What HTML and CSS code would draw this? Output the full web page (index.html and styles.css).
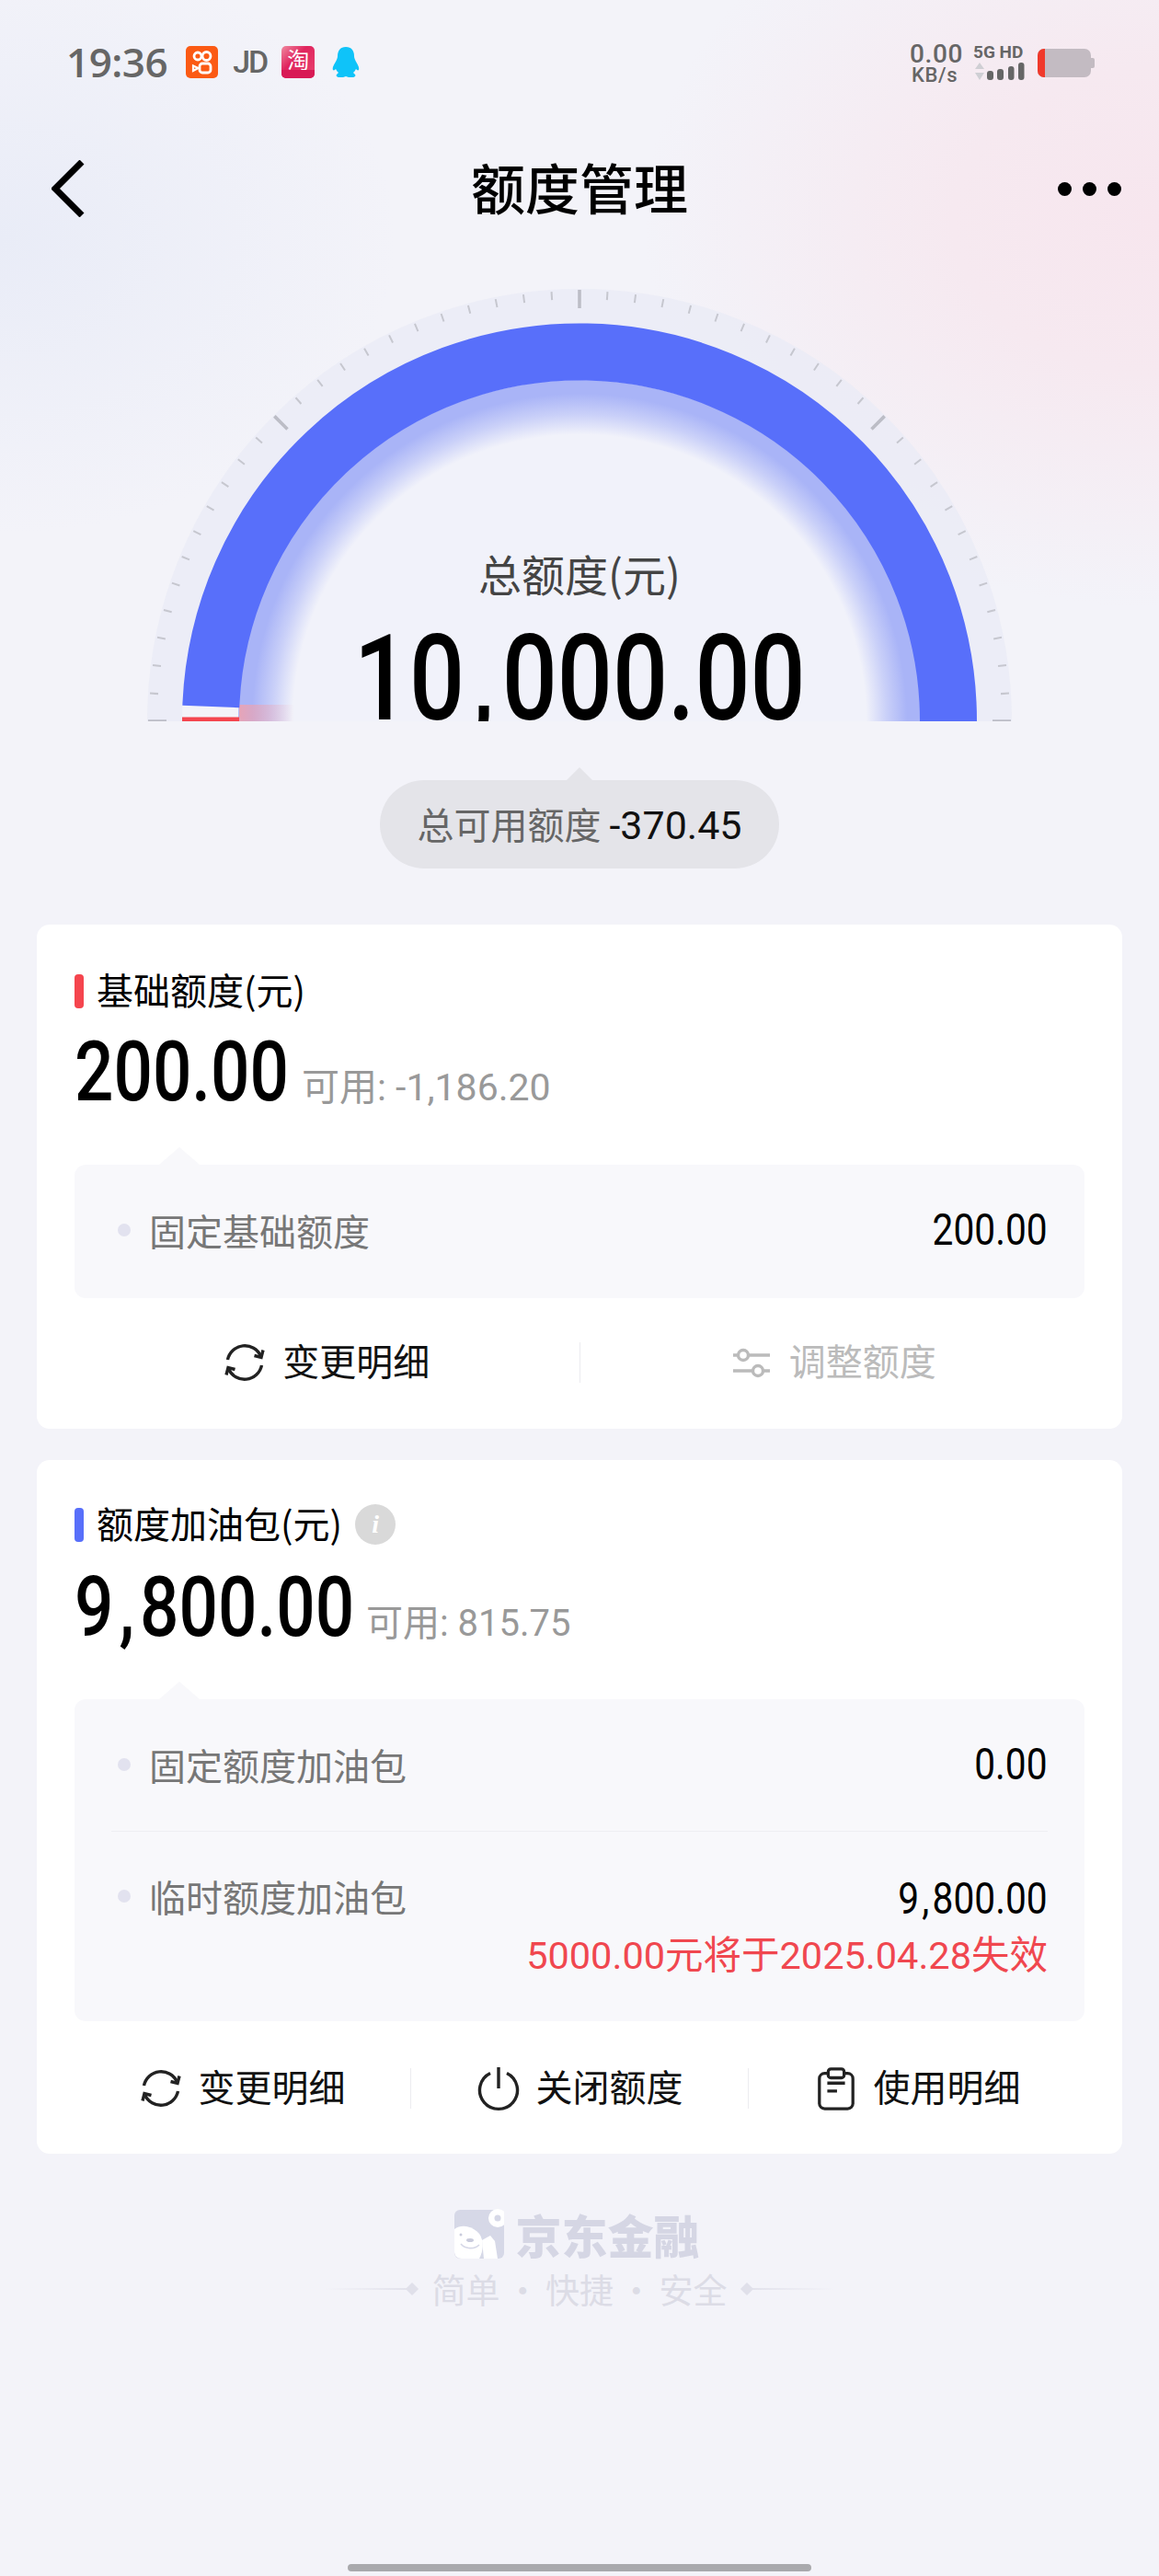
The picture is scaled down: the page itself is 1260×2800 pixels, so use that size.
FILE: index.html
```html
<!DOCTYPE html>
<html lang="zh-CN">
<head>
  <meta charset="UTF-8" />
  <meta name="viewport" content="width=device-width, initial-scale=1.0" />
  <title>额度管理</title>
  <link rel="stylesheet" href="styles.css">
</head>
<body>
  <div class="page">
    <div class="status">
      <div class="status-left">
        <span class="time">19:36</span>
        <svg class="app-icon" viewBox="0 0 35 35"><rect width="35" height="35" rx="5" fill="#fb5a14"/><g fill="none" stroke="#fff" stroke-width="2.8"><circle cx="13" cy="11" r="4"/><circle cx="22.5" cy="11" r="4.5"/><rect x="15" y="19" width="12" height="10" rx="3"/></g><path d="M8 21.5l5.5 2.5L8 27z" fill="none" stroke="#fff" stroke-width="2.2"/></svg>
        <span class="jd">JD</span>
        <div class="tao"><span>淘</span><i class="tao-strip"></i></div>
        <svg class="qq" viewBox="0 0 30 33"><path d="M15 0c6 0 9 4 9 10 0 2 1 4 2 6 2 3 4 7 3 9-1 1-2 0-3-1-1 2-2 3-3 4l2 2c1 1 0 3-3 3h-4l-3-1-3 1H8c-3 0-4-2-3-3l2-2c-1-1-2-2-3-4-1 1-2 2-3 1-1-2 1-6 3-9 1-2 2-4 2-6C6 4 9 0 15 0z" fill="#0fc3f9"/></svg>
      </div>
      <div class="status-right">
        <div class="speed"><span>0.00</span><span class="unit">KB/s</span></div>
        <div class="net">
          <span class="net-label">5G HD</span>
          <svg class="signal" viewBox="0 0 58 20"><path d="M7 0l5 7H2zM7 19l5-8H2z" fill="#cfcfd4"/><rect x="15" y="9" width="7" height="10" rx="3" fill="#666"/><rect x="26" y="7" width="7" height="12" rx="3" fill="#666"/><rect x="38" y="4" width="6.500" height="15" rx="3" fill="#666"/><rect x="49" y="0" width="6.500" height="19" rx="3" fill="#666"/></svg>
        </div>
        <svg class="battery" viewBox="0 0 62 31"><rect width="58" height="31" rx="7" fill="#c3bbc2"/><path d="M7 0h1v31H7a7 7 0 0 1-7-7V7a7 7 0 0 1 7-7z" fill="#f0392b"/><path d="M58 10h2a2 2 0 0 1 2 2v7a2 2 0 0 1-2 2h-2z" fill="#c3bbc2"/></svg>
      </div>
    </div>

    <div class="nav">
      <svg class="back" viewBox="0 0 36 62"><path d="M33 2L4 31l29 29" fill="none" stroke="#000" stroke-width="7"/></svg>
      <h1 class="nav-title">额度管理</h1>
      <div class="more"><i></i><i></i><i></i></div>
    </div>

    <div class="gauge">
      <svg class="gauge-svg" viewBox="0 0 1260 484">
        <defs>
          <radialGradient id="glow" gradientUnits="userSpaceOnUse" cx="630" cy="484" r="371">
            <stop offset="0.84" stop-color="#a9b4f7" stop-opacity="0"/>
            <stop offset="0.9" stop-color="#a9b4f7" stop-opacity="0.55"/>
            <stop offset="0.96" stop-color="#a9b4f7" stop-opacity="1"/>
            <stop offset="1" stop-color="#a9b4f7" stop-opacity="1"/>
          </radialGradient>
          <linearGradient id="pink" x1="0" x2="1" y1="0" y2="0">
            <stop offset="0" stop-color="#f5a0a8" stop-opacity="0.8"/>
            <stop offset="1" stop-color="#f5a0a8" stop-opacity="0"/>
          </linearGradient>
        </defs>
        <circle cx="630" cy="484" r="451" fill="none" stroke="#e9ebf6" stroke-opacity="0.75" stroke-width="38"/>
        <circle cx="630" cy="484" r="371" fill="#f1f2fa"/>
        <circle cx="630" cy="484" r="371" fill="url(#glow)"/>
        <rect x="260" y="466" width="60" height="18" fill="url(#pink)"/>
        <path d="M166.5 484A463.5 463.5 0 0 1 1093.5 484" fill="none" stroke="#c6c7cf" stroke-width="9" pathLength="480" stroke-dasharray="0.66 9.34" stroke-dashoffset="0.33"/>
        <path d="M171 484A459 459 0 0 1 1089 484" fill="none" stroke="#bcbdc6" stroke-width="20" pathLength="400" stroke-dasharray="1 99" stroke-dashoffset="0.5"/>
        <path d="M229.3 468A401 401 0 0 1 1031 484" fill="none" stroke="#586ffa" stroke-width="62"/>
        <path d="M198 479.5h62v4.500H198z" fill="#f4454f"/>
      </svg>
      <div class="gauge-label">总额度(元)</div>
      <div class="gauge-total"><span>10<i class="comma">,</i>000.00</span></div>
    </div>

    <div class="pill">总可用额度 <span class="pill-num">-370.45</span></div>

    <div class="card card-base">
      <div class="card-title"><i class="mark mark-red"></i>基础额度(元)</div>
      <div class="amount-row"><span class="amount">200.00</span><span class="avail">可用: -1,186.20</span></div>
      <div class="panel">
        <div class="row row-one">
          <span class="row-label"><i class="dot"></i>固定基础额度</span>
          <span class="row-value">200.00</span>
        </div>
      </div>
      <div class="actions">
        <div class="action">
          <svg class="icon" viewBox="0 0 44 44"><use href="#refresh"/></svg>
          <span>变更明细</span>
        </div>
        <div class="action action-off">
          <svg class="icon" viewBox="0 0 44 44"><path d="M2 14h6M18 14h24M2 31h22M34 31h8" fill="none" stroke="currentColor" stroke-width="3.6"/><circle cx="13" cy="14" r="5.500" fill="none" stroke="currentColor" stroke-width="3.4"/><circle cx="29" cy="31" r="5.500" fill="none" stroke="currentColor" stroke-width="3.4"/></svg>
          <span>调整额度</span>
        </div>
      </div>
    </div>

    <div class="card card-pack">
      <div class="card-title"><i class="mark mark-blue"></i>额度加油包(元)<span class="info">i</span></div>
      <div class="amount-row"><span class="amount amount-wide">9<i class="comma">,</i>800.00</span><span class="avail">可用: 815.75</span></div>
      <div class="panel">
        <div class="row row-line">
          <span class="row-label"><i class="dot"></i>固定额度加油包</span>
          <span class="row-value">0.00</span>
        </div>
        <div class="row row-temp">
          <span class="row-label"><i class="dot"></i>临时额度加油包</span>
          <div class="row-right">
            <span class="row-value">9<i class="comma">,</i>800.00</span>
            <span class="row-warn">5000.00元将于2025.04.28失效</span>
          </div>
        </div>
      </div>
      <div class="actions">
        <div class="action">
          <svg class="icon" viewBox="0 0 44 44">
            <g id="refresh" fill="none" stroke="#222" stroke-width="3.4">
              <path d="M3.500 19A19 19 0 0 1 39.500 15"/>
              <path d="M32.500 14.500l7.500 2 2-8"/>
              <path d="M40.500 25A19 19 0 0 1 4.500 29"/>
              <path d="M11.500 29.500l-7.500-2-2 8"/>
            </g>
          </svg>
          <span>变更明细</span>
        </div>
        <div class="action">
          <svg class="icon" viewBox="0 0 44 46"><path d="M13 6.500A20.500 20.500 0 1 0 31 6.500M22 0v23" fill="none" stroke="#222" stroke-width="3.4"/></svg>
          <span>关闭额度</span>
        </div>
        <div class="action">
          <svg class="icon" viewBox="0 0 44 48"><path d="M13 7H9a6 6 0 0 0-6 6v28a6 6 0 0 0 6 6h26a6 6 0 0 0 6-6V13a6 6 0 0 0-6-6h-4" fill="none" stroke="#222" stroke-width="3.4"/><rect x="13" y="2" width="18" height="10" rx="3" fill="none" stroke="#222" stroke-width="3.4"/><path d="M12 18h20M12 27h11" fill="none" stroke="#222" stroke-width="3.4"/></svg>
          <span>使用明细</span>
        </div>
      </div>
    </div>

    <div class="foot">
      <div class="foot-brand">
        <svg class="foot-logo" viewBox="0 0 54 54">
          <rect y="1" width="54" height="53" rx="6" fill="#d6d8e7"/>
          <path d="M0 22c8-6 20-3 27 5 5 7 5 18 0 27H8c-5 0-8-3-8-8z" fill="#fff"/>
          <path d="M30 34l9-5 5 6 3 19H32z" fill="#fff"/>
          <circle cx="47" cy="10" r="10" fill="#fff"/>
          <circle cx="47" cy="10" r="3.500" fill="#d6d8e7"/>
          <ellipse cx="17" cy="34" rx="4" ry="2" fill="#c9cbdc"/>
          <circle cx="7" cy="28" r="1.500" fill="#c9cbdc"/>
          <path d="M7 38c5 6 15 6 20 1" fill="none" stroke="#d6d8e7" stroke-width="1.600"/>
        </svg>
        <span>京东金融</span>
      </div>
      <div class="foot-slogan">
        <i class="foot-line foot-line-l"></i>
        <span>简单 · 快捷 · 安全</span>
        <i class="foot-line foot-line-r"></i>
      </div>
    </div>

    <div class="home-bar"></div>
  </div>
</body>
</html>
```

FILE: styles.css
```css
* { box-sizing: border-box; }
html, body { margin: 0; padding: 0; }
body { font-family: "Noto Sans CJK SC", "Noto Sans", sans-serif; color: #000; }
i { font-style: normal; }

.page {
  position: relative;
  width: 1260px;
  height: 2800px;
  overflow: hidden;
  padding-top: 48px;
  background:
    radial-gradient(ellipse 560px 420px at 1260px 240px, #f7e6ee 0%, #f6e9f0 40%, rgba(246,233,240,0) 100%),
    radial-gradient(ellipse 430px 320px at 0 260px, #e9ecf7 0%, rgba(233,236,247,0) 100%),
    #f3f3f9;
}

/* status bar */
.status { display: flex; justify-content: space-between; height: 42px; padding: 0 70px 0 72px; }
.status-left { display: flex; align-items: center; height: 38px; }
.time { font: 600 44px/38px "Open Sans", sans-serif; color: #666; margin-right: 20px; letter-spacing: -0.5px; }
.app-icon { width: 35px; height: 35px; }
.jd { font: 500 34px/38px "Roboto", sans-serif; color: #666; margin: 0 16px; letter-spacing: -2px; }
.tao {
  position: relative; width: 36px; height: 35px; border-radius: 5px; overflow: hidden;
  background: linear-gradient(135deg, #f08aa0, #e0245e 40%, #e9446f);
  color: #fff; font-size: 24px; line-height: 28px; text-align: center;
}
.tao-strip { position: absolute; left: 0; right: 0; bottom: 0; height: 9px; background: #d81a55; }
.qq { width: 30px; height: 33px; margin-left: 19px; }
.status-right { display: flex; align-items: flex-start; }
.speed { display: flex; flex-direction: column; align-items: flex-start; width: 69px; color: #666; font: 500 28px/22px "Roboto", sans-serif; letter-spacing: 0.6px; }
.speed .unit { font-size: 22px; line-height: 20px; margin: 2px 0 0 2px; }
.net { width: 70px; }
.net-label { display: block; font: 700 19px/17px "Roboto", sans-serif; color: #666; white-space: nowrap; margin-bottom: 3px; }
.signal { display: block; width: 58px; height: 20px; }
.battery { width: 62px; height: 31px; margin-top: 5px; }

/* nav */
.nav { display: flex; align-items: center; justify-content: space-between; height: 110px; margin-top: 60px; padding: 0 41px 0 56px; position: relative; }
.back { width: 36px; height: 62px; }
.nav-title { margin: 0; font-size: 59px; font-weight: 500; line-height: 106px; position: absolute; left: 0; right: 0; top: 0; text-align: center; }
.more { display: flex; gap: 12px; }
.more i { width: 15px; height: 15px; border-radius: 50%; background: #000; }

/* gauge */
.gauge { position: relative; height: 484px; margin-top: 40px; }
.gauge-svg { display: block; width: 1260px; height: 484px; }
.gauge-label { position: absolute; left: 0; right: 0; top: 288px; text-align: center; font-size: 47px; line-height: 70px; color: #444; }
.gauge-total {
  position: absolute; left: 0; right: 0; top: 366px; height: 118px; overflow: hidden;
  text-align: center;
  font: 500 129px/144px "Roboto", sans-serif;
}
.gauge-total span { display: inline-block; transform: scaleX(.82); }
.comma { margin: 0 .08em; }

.pill {
  position: relative;
  width: 434px; height: 96px; margin: 64px auto 0;
  border-radius: 48px; background: #e4e4e9;
  font-size: 40px; line-height: 94px; text-align: center; color: #666;
}
.pill::before {
  content: ""; position: absolute; left: 50%; top: -14px; margin-left: -14px;
  border: 14px solid transparent; border-top: 0; border-bottom: 14px solid #e4e4e9;
}
.pill-num { font: 400 43px/94px "Roboto", sans-serif; color: #111; }

/* cards */
.card { width: 1180px; margin-left: 40px; background: #fff; border-radius: 14px; padding: 0 40px; }
.card-base { height: 548px; margin-top: 61px; padding-top: 48px; }
.card-pack { height: 754px; margin-top: 34px; padding-top: 46px; }
.card-title { display: flex; align-items: center; height: 48px; font-size: 40px; line-height: 48px; padding-bottom: 4px; }
.mark { width: 10px; height: 37px; border-radius: 4px; margin: 4px 14px 0 1px; }
.mark-red { background: #f5454e; }
.mark-blue { background: #586ffa; }
.info {
  width: 44px; height: 44px; border-radius: 50%; margin: 4px 0 0 14px; background: #d9d9d9;
  color: #fff; font: italic 700 28px/44px "Liberation Serif", serif; text-align: center;
}
.amount-row { display: flex; align-items: baseline; height: 96px; margin-top: 17px; }
.card-pack .amount-row { margin-top: 19px; }
.amount {
  width: 229px; white-space: nowrap; margin-left: 1px;
  font: 500 90px/96px "Roboto", sans-serif;
  transform: scaleX(.83); transform-origin: left;
}
.amount-wide { width: 299px; }
.avail { font: 400 41px/96px "Roboto", "Noto Sans CJK SC", sans-serif; color: #999; margin-left: 18px; }
.card-pack .avail { font-size: 40px; }

.panel { position: relative; width: 1098px; margin-left: 1px; background: #f8f8fb; border-radius: 12px; }
.card-base .panel { height: 145px; margin-top: 52px; }
.card-pack .panel { height: 350px; margin-top: 51px; }
.panel::before {
  content: ""; position: absolute; left: 92px; top: -19px;
  border: 22px solid transparent; border-top: 0; border-bottom: 19px solid #f8f8fb;
}
.row { display: flex; justify-content: space-between; align-items: center; margin: 0 40px; }
.row-one { height: 145px; padding-bottom: 3px; }
.row-line { height: 144px; padding-bottom: 2px; border-bottom: 1px solid #eeeef2; }
.row-temp { align-items: flex-start; padding-top: 42px; }
.row-label { display: flex; align-items: center; font-size: 40px; line-height: 56px; color: #777; }
.dot { width: 14px; height: 14px; border-radius: 50%; background: #e2e2ef; margin: 0 20px 0 7px; }
.row-value { font: 400 49px/56px "Roboto", sans-serif; transform: scaleX(.83); transform-origin: right; }
.row-right { display: flex; flex-direction: column; align-items: flex-end; margin-top: 3px; }
.row-warn { font: 400 41.5px/56px "Roboto", "Noto Sans CJK SC", sans-serif; color: #f0474f; margin-top: 6px; }

.actions { display: flex; height: 44px; }
.card-base .actions { margin-top: 48px; }
.card-pack .actions { margin-top: 51px; }
.action { flex: 1; display: flex; align-items: center; justify-content: center; gap: 19px; padding-left: 2px; font-size: 40px; line-height: 44px; color: #111; }
.action span { padding-bottom: 7px; }
.action + .action { border-left: 1px solid #ececf0; }
.action-off { color: #bbb; }
.icon { width: 44px; height: 46px; overflow: visible; }

/* footer */
.foot { margin-top: 60px; display: flex; flex-direction: column; align-items: center; }
.foot-brand { display: flex; align-items: center; gap: 13px; font-size: 50px; font-weight: 900; line-height: 54px; color: #d5d6e4; margin-left: -6px; }
.foot-logo { width: 54px; height: 54px; }
.foot-slogan { display: flex; align-items: center; gap: 16px; margin-top: 5px; font-size: 37px; line-height: 56px; color: #dcdce6; word-spacing: -2px; }
.foot-line { position: relative; width: 100px; height: 2px; }
.foot-line::after { content: ""; position: absolute; top: -4px; width: 10px; height: 10px; transform: rotate(45deg); background: #e0e0ea; }
.foot-line-l { background: linear-gradient(90deg, rgba(224,224,234,0), #e0e0ea); }
.foot-line-l::after { right: 0; }
.foot-line-r { background: linear-gradient(90deg, #e0e0ea, rgba(224,224,234,0)); }
.foot-line-r::after { left: 0; }

.home-bar { position: absolute; left: 378px; top: 2787px; width: 504px; height: 8px; border-radius: 4px; background: #a9a9ad; }
```
